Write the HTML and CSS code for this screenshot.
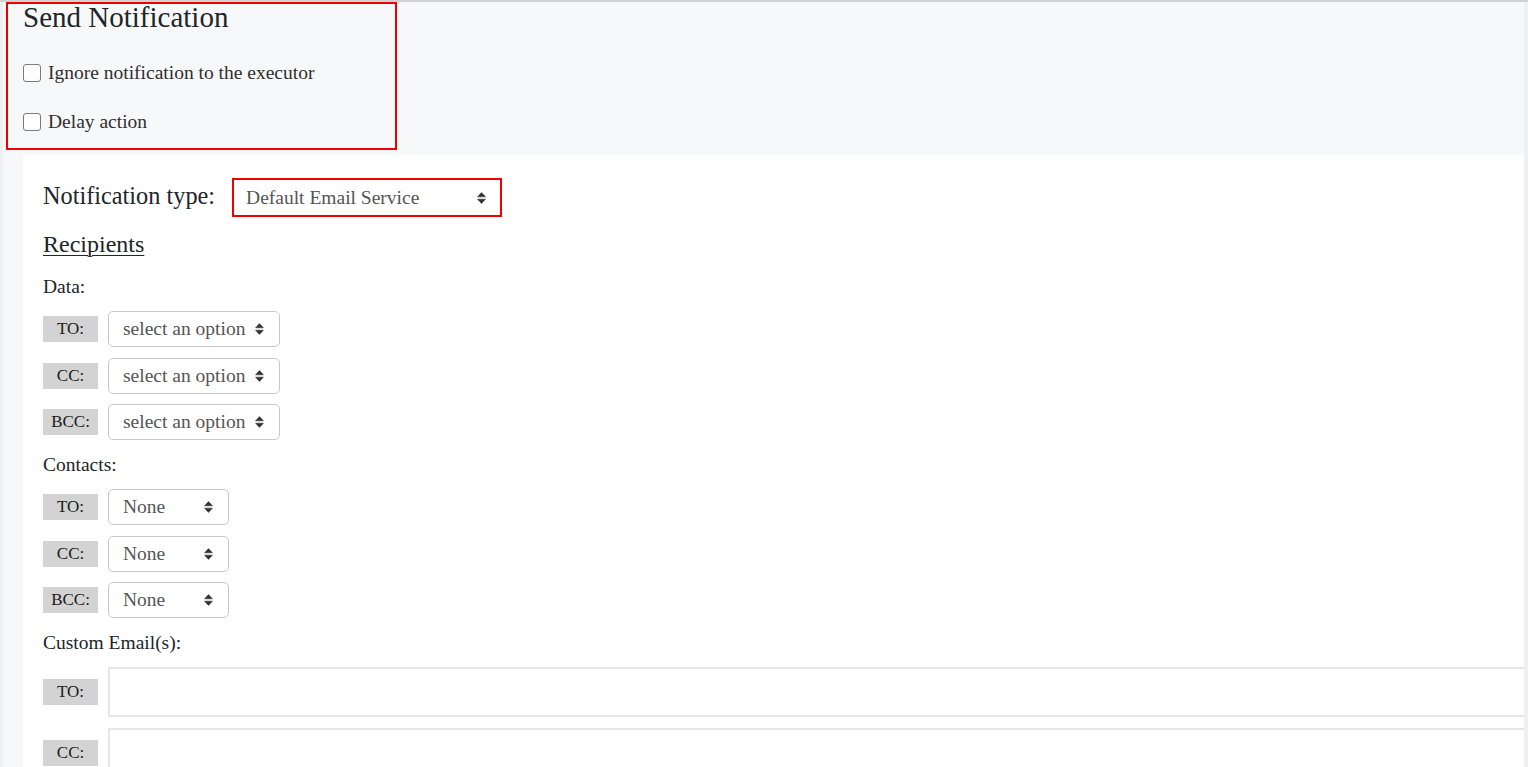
FILE: index.html
```html
<!DOCTYPE html>
<html lang="en">
<head>
<meta charset="utf-8">
<title>Send Notification</title>
<link rel="stylesheet" href="styles.css">
</head>
<body>
<div class="page">
  <div class="header">
    <div class="highlight">
      <h2 class="title">Send Notification</h2>
      <label class="check-row first"><input type="checkbox" class="check"><span>Ignore notification to the executor</span></label>
      <label class="check-row"><input type="checkbox" class="check"><span>Delay action</span></label>
    </div>
  </div>
  <div class="panel">
    <div class="type-row">
      <span class="type-label">Notification type:</span>
      <div class="select select-type">
        <span>Default Email Service</span>
        <svg class="caret" width="9" height="12" viewBox="0 0 9 12"><path d="M4.5 0.6 L8.4 4.8 H0.6 Z M0.6 7.2 H8.4 L4.5 11.4 Z" fill="#333" stroke="#333" stroke-width="0.6" stroke-linejoin="round"/></svg>
      </div>
    </div>
    <div class="section-title">Recipients</div>

    <div class="group-label">Data:</div>
    <div class="rows">
      <div class="row"><span class="tag">TO:</span><div class="select select-wide"><span>select an option</span><svg class="caret" width="9" height="12" viewBox="0 0 9 12"><path d="M4.5 0.6 L8.4 4.8 H0.6 Z M0.6 7.2 H8.4 L4.5 11.4 Z" fill="#333" stroke="#333" stroke-width="0.6" stroke-linejoin="round"/></svg></div></div>
      <div class="row"><span class="tag">CC:</span><div class="select select-wide"><span>select an option</span><svg class="caret" width="9" height="12" viewBox="0 0 9 12"><path d="M4.5 0.6 L8.4 4.8 H0.6 Z M0.6 7.2 H8.4 L4.5 11.4 Z" fill="#333" stroke="#333" stroke-width="0.6" stroke-linejoin="round"/></svg></div></div>
      <div class="row"><span class="tag">BCC:</span><div class="select select-wide"><span>select an option</span><svg class="caret" width="9" height="12" viewBox="0 0 9 12"><path d="M4.5 0.6 L8.4 4.8 H0.6 Z M0.6 7.2 H8.4 L4.5 11.4 Z" fill="#333" stroke="#333" stroke-width="0.6" stroke-linejoin="round"/></svg></div></div>
    </div>

    <div class="group-label">Contacts:</div>
    <div class="rows">
      <div class="row"><span class="tag">TO:</span><div class="select select-narrow"><span>None</span><svg class="caret" width="9" height="12" viewBox="0 0 9 12"><path d="M4.5 0.6 L8.4 4.8 H0.6 Z M0.6 7.2 H8.4 L4.5 11.4 Z" fill="#333" stroke="#333" stroke-width="0.6" stroke-linejoin="round"/></svg></div></div>
      <div class="row"><span class="tag">CC:</span><div class="select select-narrow"><span>None</span><svg class="caret" width="9" height="12" viewBox="0 0 9 12"><path d="M4.5 0.6 L8.4 4.8 H0.6 Z M0.6 7.2 H8.4 L4.5 11.4 Z" fill="#333" stroke="#333" stroke-width="0.6" stroke-linejoin="round"/></svg></div></div>
      <div class="row"><span class="tag">BCC:</span><div class="select select-narrow"><span>None</span><svg class="caret" width="9" height="12" viewBox="0 0 9 12"><path d="M4.5 0.6 L8.4 4.8 H0.6 Z M0.6 7.2 H8.4 L4.5 11.4 Z" fill="#333" stroke="#333" stroke-width="0.6" stroke-linejoin="round"/></svg></div></div>
    </div>

    <div class="group-label">Custom Email(s):</div>
    <div class="rows">
      <div class="row"><span class="tag">TO:</span><textarea class="area"></textarea></div>
      <div class="row"><span class="tag">CC:</span><textarea class="area"></textarea></div>
      <div class="row"><span class="tag">BCC:</span><textarea class="area"></textarea></div>
    </div>
  </div>
</div>
</body>
</html>
```

FILE: styles.css
```css
html, body {
  margin: 0;
  padding: 0;
}
body {
  background: #eef0f2;
  border-top: 2px solid #d0d1d3;
  font-family: "Liberation Serif", "Times New Roman", serif;
  font-size: 19.5px;
  color: #212529;
  height: 765px;
  overflow: hidden;
}
.page {
  margin: 0 4px 0 3px;
  background: #f7f8fa;
  min-height: 765px;
}
.header {
  padding: 0 0 5px 3px;
}
.highlight {
  width: 391px;
  box-sizing: border-box;
  border: 2px solid #ee0000;
  padding: 0 16px 14px 15px;
}
.title {
  margin: 0;
  font-size: 29px;
  font-weight: normal;
  line-height: 26px;
}
.check-row {
  display: flex;
  align-items: center;
  line-height: 24px;
  margin-top: 25px;
  color: #2f2f2f;
}
.check-row.first {
  margin-top: 31px;
}
.check {
  appearance: none;
  -webkit-appearance: none;
  width: 18px;
  height: 18px;
  margin: 0 7px 0 0;
  border: 1.5px solid #7a7a7a;
  border-radius: 3px;
  background: #fff;
  box-sizing: border-box;
}
.panel {
  margin-left: 20px;
  background: #ffffff;
  padding: 23px 0 0 20px;
  min-height: 612px;
}
.type-row {
  display: flex;
  align-items: center;
}
.type-label {
  font-size: 24.3px;
  margin-right: 17px;
  position: relative;
  top: -2px;
}
.select {
  display: flex;
  align-items: center;
  justify-content: space-between;
  box-sizing: border-box;
  height: 36px;
  border: 1px solid #c8c8c8;
  border-radius: 5px;
  padding: 0 15px 0 14px;
  color: #555;
  background: #fff;
}
.select-type {
  width: 270px;
  height: 39px;
  border: 2px solid #ee0000;
  border-radius: 0;
  padding: 0 14px 0 12px;
}
.select-wide {
  width: 172px;
}
.select-narrow {
  width: 121px;
}
.caret {
  display: block;
  flex: none;
}
.section-title {
  margin-top: 13px;
  font-size: 24px;
  line-height: 28px;
  text-decoration: underline;
  text-underline-offset: 3px;
  text-decoration-thickness: 1px;
}
.group-label {
  margin-top: 17px;
  line-height: 24px;
}
.rows + .group-label {
  margin-top: 13px;
}
.rows {
  margin-top: 12px;
  display: flex;
  flex-direction: column;
  gap: 10.5px;
}
.row {
  display: flex;
  align-items: center;
}
.tag {
  width: 55px;
  height: 26px;
  line-height: 26px;
  text-align: center;
  background: #d3d3d3;
  font-size: 17px;
  color: #1a1a1a;
  margin-right: 10px;
  flex: none;
}
.area {
  flex: 1;
  height: 50px;
  box-sizing: border-box;
  border: 2px solid #e6e6e6;
  border-right: none;
  margin: 0;
  padding: 4px 8px;
  resize: none;
  font-family: inherit;
  font-size: 19.5px;
  background: #fff;
}
```
